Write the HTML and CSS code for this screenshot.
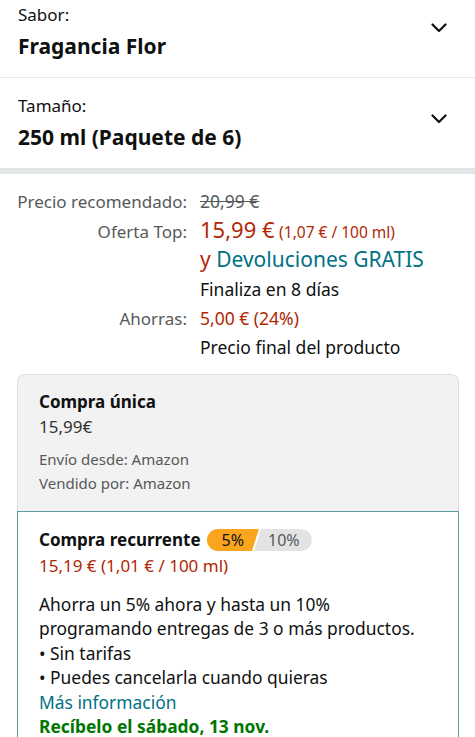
FILE: index.html
```html
<!DOCTYPE html>
<html lang="es">
  <head>
    <meta charset="utf-8" />
    <meta name="viewport" content="width=device-width, initial-scale=1" />
    <link rel="stylesheet" href="styles.css">
    <title>Fragancia Flor - 250 ml</title>
  </head>
  <body>
    <!-- Selectores de variante -->
    <div class="variations">
      <div class="var-row var-row--first">
        <div class="var-row__text">
          <div class="var-row__label">Sabor:</div>
          <div class="var-row__value">Fragancia Flor</div>
        </div>
        <svg class="chevron" viewBox="0 0 16 10" width="16" height="10">
          <path d="M1.5 1.5 L8 8 L14.5 1.5" fill="none" stroke="#0f1111" stroke-width="2.2" stroke-linecap="round" stroke-linejoin="round" />
        </svg>
      </div>
      <div class="var-row">
        <div class="var-row__text">
          <div class="var-row__label">Tamaño:</div>
          <div class="var-row__value">250 ml (Paquete de 6)</div>
        </div>
        <svg class="chevron" viewBox="0 0 16 10" width="16" height="10">
          <path d="M1.5 1.5 L8 8 L14.5 1.5" fill="none" stroke="#0f1111" stroke-width="2.2" stroke-linecap="round" stroke-linejoin="round" />
        </svg>
      </div>
    </div>

    <div class="divider"></div>

    <!-- Tabla de precios -->
    <div class="price-table">
      <div class="price-table__label">Precio recomendado:</div>
      <div class="price-table__value"><span class="strike">20,99 €</span></div>

      <div class="price-table__label price-table__label--big">Oferta Top:</div>
      <div class="price-table__value price-table__value--big">
        <span class="price-red price-big">15,99 €</span>
        <span class="price-red price-unit">(1,07 € / 100 ml)</span>
      </div>

      <div></div>
      <div class="price-table__value price-table__value--returns">
        <span class="price-red">y</span> <span class="link">Devoluciones GRATIS</span>
      </div>

      <div></div>
      <div class="price-table__value">Finaliza en 8 días</div>

      <div class="price-table__label">Ahorras:</div>
      <div class="price-table__value price-red">5,00 € (24%)</div>

      <div></div>
      <div class="price-table__value">Precio final del producto</div>
    </div>

    <!-- Opciones de compra -->
    <div class="buy-box buy-box--once">
      <div class="buy-box__title">Compra única</div>
      <div class="buy-box__price">15,99€</div>
      <div class="buy-box__meta">
        <div>Envío desde: Amazon</div>
        <div>Vendido por: Amazon</div>
      </div>
    </div>

    <div class="buy-box buy-box--sns">
      <div class="buy-box__title">
        Compra recurrente
        <span class="discount">
          <span class="discount__now">5%</span>
          <span class="discount__max">10%</span>
        </span>
      </div>
      <div class="buy-box__price price-red">15,19 € (1,01 € / 100 ml)</div>
      <div class="buy-box__desc">
        <div>Ahorra un 5% ahora y hasta un 10% programando entregas de 3 o más productos.</div>
        <div>• Sin tarifas</div>
        <div>• Puedes cancelarla cuando quieras</div>
        <div class="link">Más información</div>
        <div class="delivery">Recíbelo el sábado, 13 nov.</div>
      </div>
    </div>
  </body>
</html>
```

FILE: styles.css
```css
/* Base */
*, *::before, *::after {
  box-sizing: border-box;
}

html, body {
  margin: 0;
  padding: 0;
  background: #fff;
  color: #0f1111;
  font-family: 'Noto Sans', 'Liberation Sans', sans-serif;
  overflow: hidden;
}

/* Selectores de variante */
.var-row {
  display: flex;
  align-items: center;
  padding: 16px 28px 12px 18px;
  border-bottom: 1px solid #e7e7e7;
}

.var-row--first {
  padding-top: 3px;
}

.var-row:last-child {
  border-bottom: none;
}

.var-row__text {
  flex: 1;
}

.var-row__label {
  font-size: 17px;
  line-height: 24px;
  color: #0f1111;
}

.var-row__value {
  font-size: 21px;
  line-height: 38px;
  font-weight: 700;
}

.chevron {
  margin-bottom: 12px;
}

.divider {
  height: 6px;
  background: #e3e6e6;
}

/* Tabla de precios */
.price-table {
  display: grid;
  grid-template-columns: 170px auto;
  column-gap: 13px;
  padding: 13px 0 0 17px;
  font-size: 17.5px;
  line-height: 29px;
}

.price-table__label {
  text-align: right;
  font-size: 17px;
  color: #565959;
}

.price-table__label--big {
  padding-top: 1px;
}

.price-table__value--big {
  line-height: 27px;
}

.price-table__value--returns {
  font-size: 21px;
  line-height: 26px;
  padding-bottom: 3px;
}

.strike {
  color: #565959;
  text-decoration: line-through;
}

.price-red {
  color: #b12704;
}

.price-big {
  font-size: 22px;
}

.price-unit {
  font-size: 15.5px;
}

.link {
  color: #007185;
}

/* Opciones de compra */
.buy-box {
  margin: 0 16px 0 17px;
  padding: 0 20px 0 21px;
}

.buy-box--once {
  margin-top: 12px;
  padding-top: 15px;
  padding-bottom: 16px;
  background: #f2f2f2;
  border: 1px solid #dcdfdf;
  border-bottom: none;
  border-radius: 8px 8px 0 0;
}

.buy-box--sns {
  padding-top: 16px;
  padding-bottom: 20px;
  border: 1px solid #5b9a9d;
}

.buy-box__title {
  display: flex;
  align-items: center;
  gap: 6px;
  font-size: 17px;
  line-height: 24px;
  font-weight: 700;
}

.buy-box__price {
  font-size: 17px;
  line-height: 25px;
  color: #333;
}

.buy-box--sns .buy-box__price {
  line-height: 27px;
  color: #b12704;
}

.buy-box__meta {
  margin-top: 8px;
  font-size: 15px;
  line-height: 24px;
  color: #565959;
}

.buy-box__desc {
  margin-top: 13px;
  font-size: 17.4px;
  line-height: 24.4px;
}

.delivery {
  color: #007600;
  font-weight: 700;
}

/* Selector de descuento */
.discount {
  display: inline-flex;
  height: 22px;
  border-radius: 11px;
  overflow: hidden;
  font-size: 16px;
  font-weight: 400;
  line-height: 22px;
}

.discount__now {
  padding: 0 15px 0 15px;
  background: #fba41e;
  color: #0f1111;
  clip-path: polygon(0 0, 100% 0, calc(100% - 7px) 100%, 0 100%);
}

.discount__max {
  margin-left: -5px;
  padding: 0 12px 0 14px;
  background: #e3e3e3;
  color: #565959;
  clip-path: polygon(7px 0, 100% 0, 100% 100%, 0 100%);
}
```
